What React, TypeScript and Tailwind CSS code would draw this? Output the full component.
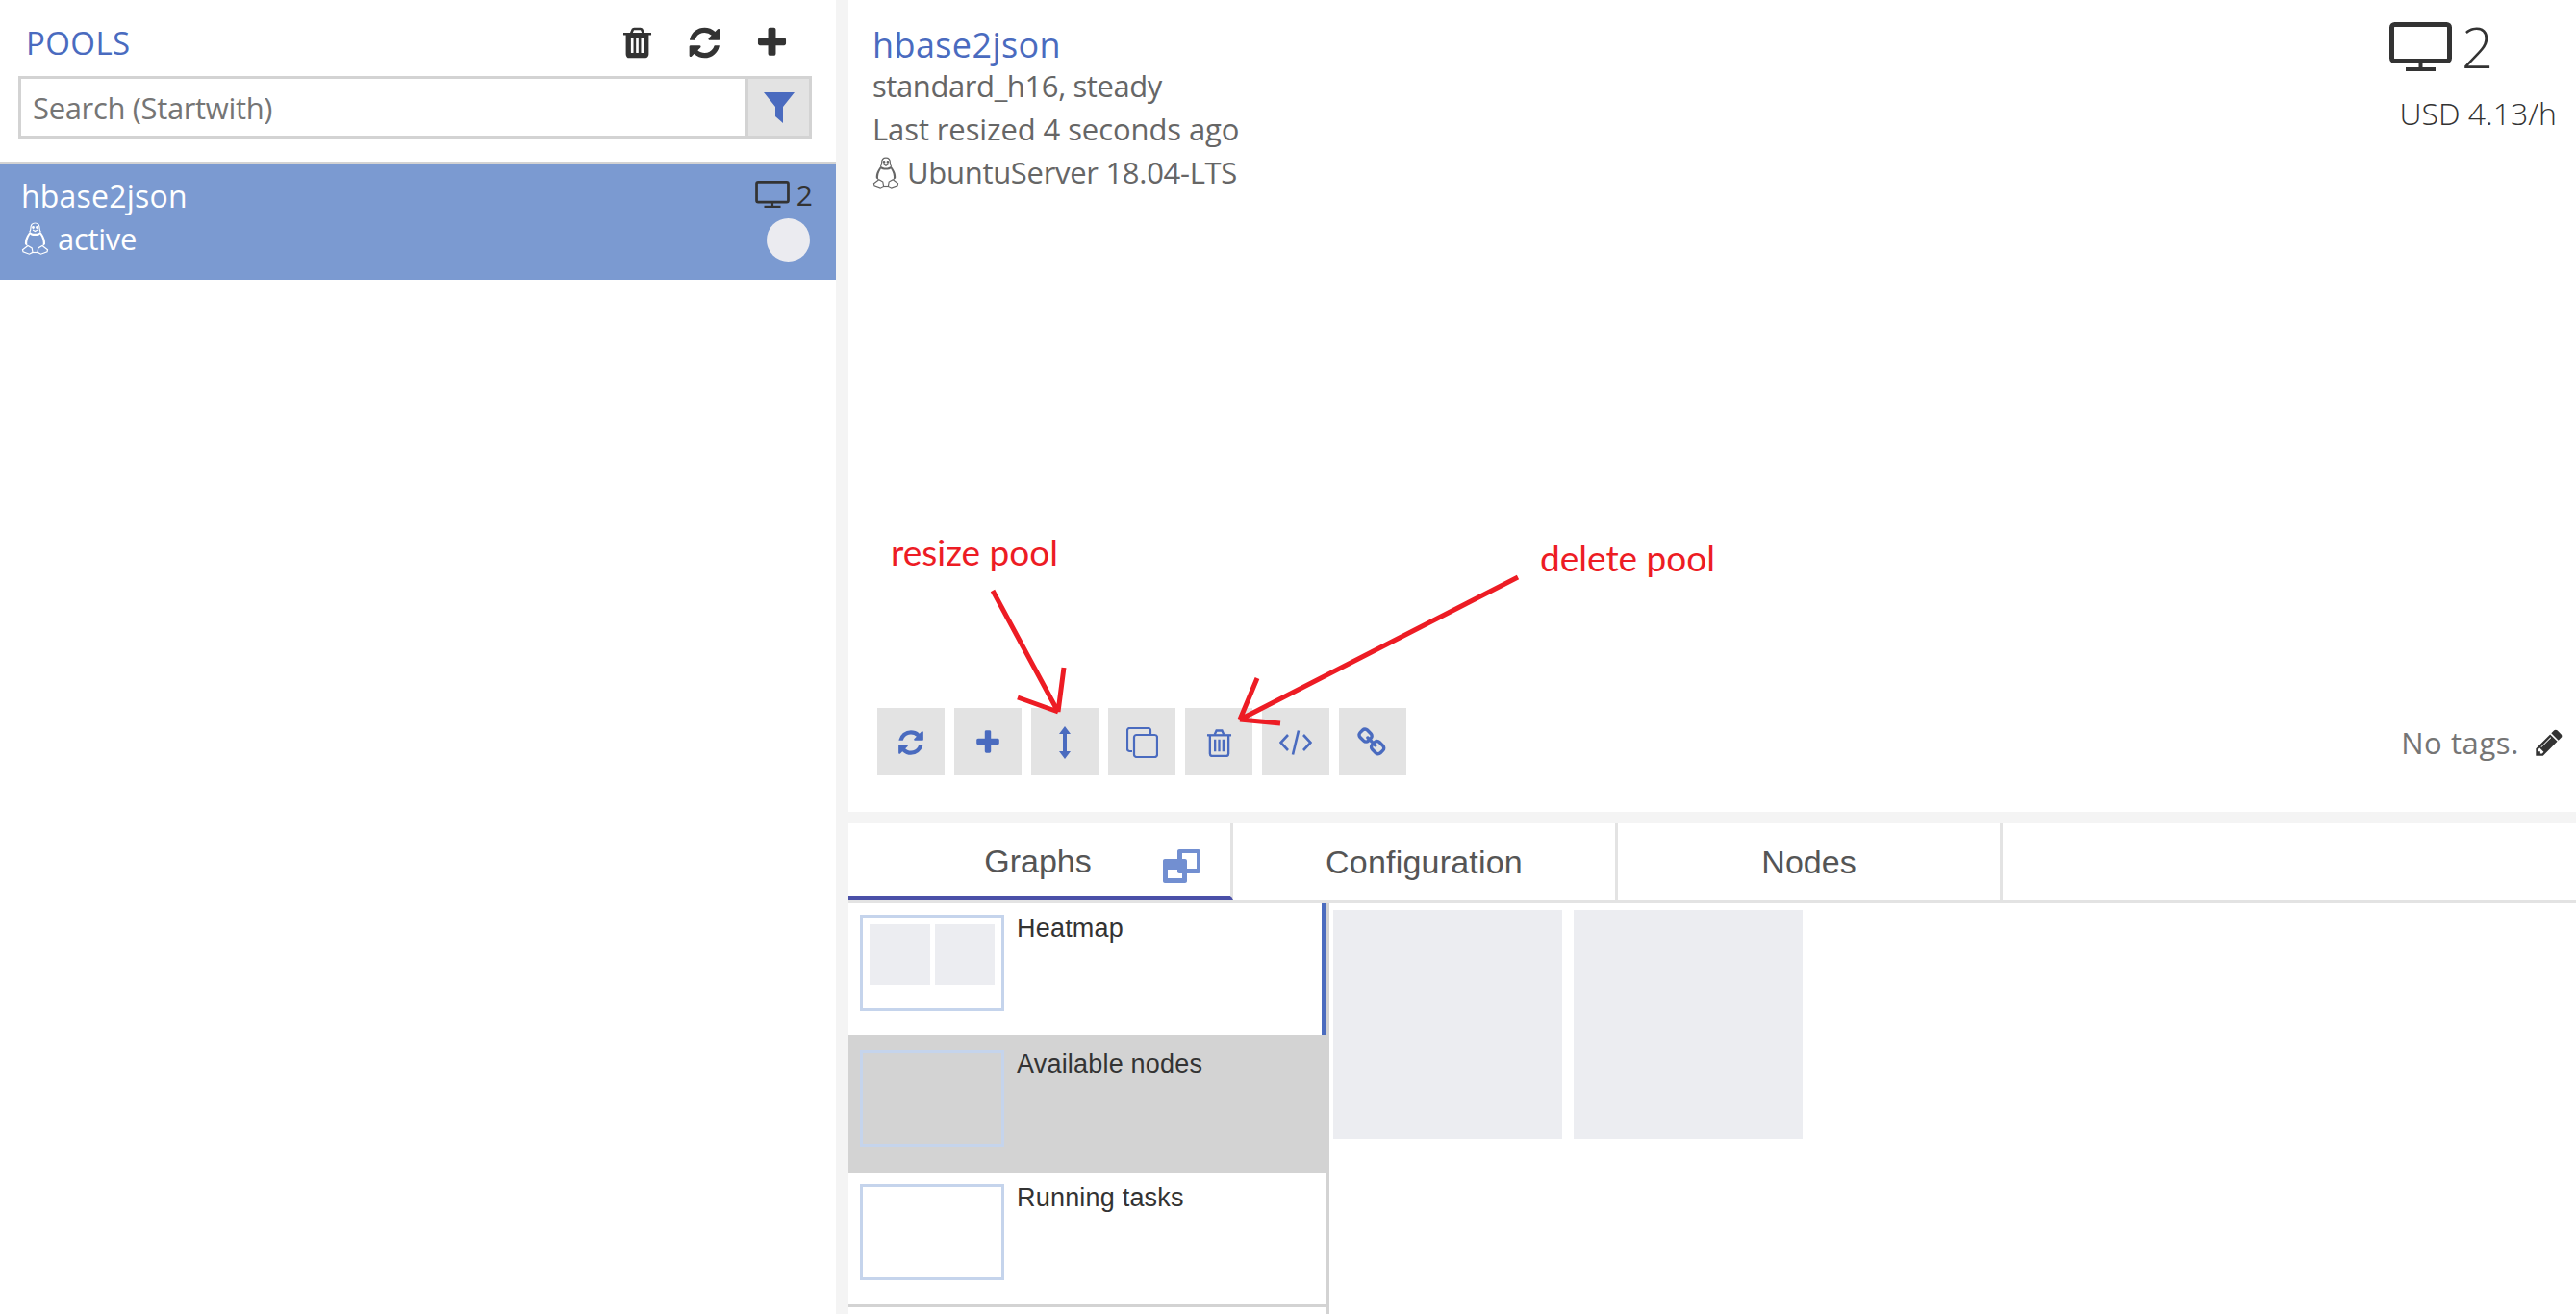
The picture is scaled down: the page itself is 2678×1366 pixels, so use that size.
import React from "react";

const segoe = "font-['Open_Sans','Noto_Sans',sans-serif]";

const faPaths = {
  refresh:
    "M1639 1056q0 5-1 7-64 268-268 434.5t-478 166.5q-146 0-282.5-55t-243.5-157l-129 129q-19 19-45 19t-45-19-19-45v-448q0-26 19-45t45-19h448q26 0 45 19t19 45-19 45l-137 137q71 66 161 102t187 36q134 0 250-65t186-179q11-17 53-117 8-23 30-23h192q13 0 22.5 9.5t9.5 22.5zm25-800v448q0 26-19 45t-45 19h-448q-26 0-45-19t-19-45 19-45l138-138q-148-137-349-137-134 0-250 65t-186 179q-11 17-53 117-8 23-30 23h-199q-13 0-22.5-9.5t-9.5-22.5v-7q65-268 270-434.5t480-166.5q146 0 284 55.5t245 156.5l130-129q19-19 45-19t45 19 19 45z",
  trash:
    "M704 1376v-704q0-14-9-23t-23-9h-64q-14 0-23 9t-9 23v704q0 14 9 23t23 9h64q14 0 23-9t9-23zm256 0v-704q0-14-9-23t-23-9h-64q-14 0-23 9t-9 23v704q0 14 9 23t23 9h64q14 0 23-9t9-23zm256 0v-704q0-14-9-23t-23-9h-64q-14 0-23 9t-9 23v704q0 14 9 23t23 9h64q14 0 23-9t9-23zm-544-992h448l-48-117q-7-9-17-11h-317q-10 2-17 11zm928 32v64q0 14-9 23t-23 9h-96v948q0 83-47 143.5t-113 60.5h-832q-66 0-113-58.5t-47-141.5v-952h-96q-14 0-23-9t-9-23v-64q0-14 9-23t23-9h309l70-167q15-37 54-63t79-26h320q40 0 79 26t54 63l70 167h309q14 0 23 9t9 23z",
  plus:
    "M1600 736v192q0 40-28 68t-68 28h-416v416q0 40-28 68t-68 28h-192q-40 0-68-28t-28-68v-416h-416q-40 0-68-28t-28-68v-192q0-40 28-68t68-28h416v-416q0-40 28-68t68-28h192q40 0 68 28t28 68v416h416q40 0 68 28t28 68z",
  link:
    "M1456 1216q0-40-28-68l-208-208q-28-28-68-28-42 0-72 32 3 3 19 18.5t21.5 21.5 15 19 13 25.5 3.5 27.5q0 40-28 68t-68 28q-15 0-27.5-3.5t-25.5-13-19-15-21.5-21.5-18.5-19q-33 31-33 73 0 40 28 68l206 207q27 27 68 27 40 0 68-26l147-146q28-28 28-67zm-703-705q0-40-28-68l-206-207q-28-28-68-28-39 0-68 27l-147 146q-28 28-28 67 0 40 28 68l208 208q27 27 68 27 42 0 72-31-3-3-19-18.5t-21.5-21.5-15-19-13-25.5-3.5-27.5q0-40 28-68t68-28q15 0 27.5 3.5t25.5 13 19 15 21.5 21.5 18.5 19q33-31 33-73zm895 705q0 120-85 203l-147 146q-83 83-203 83-121 0-204-85l-206-207q-83-83-83-203 0-123 88-209l-88-88q-86 88-208 88-120 0-204-84l-208-208q-84-84-84-204t85-203l147-146q83-83 203-83 121 0 204 85l206 207q83 83 83 203 0 123-88 209l88 88q86-88 208-88 120 0 204 84l208 208q84 84 84 204z",
  pencil:
    "M491 1536l91-91-235-235-91 91v107h128v128h107zm523-928q0-22-22-22-10 0-17 7l-542 542q-7 7-7 17 0 22 22 22 10 0 17-7l542-542q7-7 7-17zm-54-192l416 416-832 832h-416v-416zm683 96q0 53-37 90l-166 166-416-416 166-165q36-38 90-38 53 0 91 38l235 234q37 39 37 91z",
};

function Fa({ d, className }: { d: string; className?: string }) {
  return (
    <svg viewBox="0 0 1792 1792" fill="currentColor" className={className}>
      <path d={d} />
    </svg>
  );
}

function Monitor({ className }: { className?: string }) {
  return (
    <svg viewBox="0 0 65 51" fill="none" stroke="currentColor" className={className}>
      <rect x="2.5" y="2.5" width="60" height="38" rx="3" strokeWidth="5" />
      <path d="M32.5 41v7" strokeWidth="4" />
      <path d="M17 49h31" strokeWidth="4" />
    </svg>
  );
}

// outlined penguin, dark back and flippers, open belly
function Tux({ className }: { className?: string }) {
  return (
    <svg viewBox="0 0 29 34" fill="none" stroke="currentColor" strokeWidth="1.2" className={className}>
      <path d="M14.5 1c3.200 0 4.600 2.600 4.600 5.600 0 1.500.4 2.500 1.200 3.600" />
      <path d="M14.500 1c-3.200 0-4.600 2.600-4.600 5.600 0 1.500-.4 2.500-1.200 3.600" />
      <path fill="currentColor" stroke="none" d="M9 10c-3 3.500-5.500 8-5 13l2.500 2c-1-5 .5-9 2.800-12.500 1 1 2.200 1.500 5.200 1.500s4.200-.5 5.200-1.500c2.300 3.500 3.800 7.500 2.800 12.500l2.500-2c.5-5-2-9.500-5-13-1.500 1.300-3 1.800-5.500 1.800S10.500 11.300 9 10z" />
      <path d="M7 24.500L1.500 28.700l.5 2 6.500 2.500 3.500-1.800-.8-4.500z" />
      <path d="M22 24.500l5.500 4.200-.5 2-6.500 2.500-3.500-1.800.8-4.500z" />
      <path d="M11.500 31.500h6" />
      <circle cx="12.500" cy="5.500" r=".8" fill="currentColor" />
      <circle cx="16.500" cy="5.500" r=".8" fill="currentColor" />
      <path d="M12 8l2.500 1.500L17 8" />
    </svg>
  );
}

function CloneIcon({ className }: { className?: string }) {
  return (
    <svg viewBox="0 0 33 32" fill="none" stroke="currentColor" strokeWidth="2.2" className={className}>
      <path d="M6 25H3.500C2 25 1 24 1 22.500V3.500C1 2 2 1 3.500 1h19C24 1 25 2 25 3.500V7" />
      <rect x="8" y="8" width="24" height="23" rx="2.500" />
    </svg>
  );
}

function ThinTrash({ className }: { className?: string }) {
  return (
    <svg viewBox="0 0 28 30" fill="none" stroke="currentColor" strokeWidth="2.400" className={className}>
      <path d="M1 6.500h26" />
      <path d="M9 6l2-4.500h6L19 6" />
      <path d="M4 7v19.500C4 28 5 29 6.500 29h15c1.500 0 2.500-1 2.500-2.500V7" />
      <path d="M9.500 11v13M14 11v13M18.500 11v13" />
    </svg>
  );
}

function ResizeArrow({ className }: { className?: string }) {
  return (
    <svg viewBox="0 0 14 34" fill="currentColor" className={className}>
      <path d="M7 0l6 8H9v18h4l-6 8-6-8h4V8H1z" />
    </svg>
  );
}

function CodeIcon({ className }: { className?: string }) {
  return (
    <svg viewBox="0 0 34 26" fill="none" stroke="currentColor" strokeWidth="2.600" className={className}>
      <path d="M9 5L1.500 13 9 21" />
      <path d="M25 5l7.500 8-7.500 8" />
      <path d="M20 0.500L14 25.500" />
    </svg>
  );
}

function RestoreIcon({ className }: { className?: string }) {
  return (
    <svg viewBox="0 0 40 35" className={className}>
      <path fill="#728fd1" fillRule="evenodd" d="M17 0h20c1.100 0 2 .900 2 2v21c0 1.100-.900 2-2 2H17c-1.100 0-2-.900-2-2V2c0-1.100.900-2 2-2zm3 4v16h15V4z" />
      <path fill="#728fd1" fillRule="evenodd" d="M2 10h21c1.100 0 2 .900 2 2v21c0 1.100-.900 2-2 2H2c-1.100 0-2-.900-2-2V12c0-1.100.900-2 2-2zm3 11v9h15v-9z" />
    </svg>
  );
}

const toolbar = [
  <Fa d={faPaths.refresh} className="w-[30px] h-[30px]" />,
  <Fa d={faPaths.plus} className="w-[30px] h-[30px]" />,
  <ResizeArrow className="w-[14px] h-[34px]" />,
  <CloneIcon className="w-[33px] h-[32px]" />,
  <ThinTrash className="w-[27px] h-[29px]" />,
  <CodeIcon className="w-[34px] h-[26px]" />,
  <Fa d={faPaths.link} className="w-[32px] h-[32px]" />,
];

const graphs = [
  { name: "Heatmap", rowClass: "h-[137px] pt-[12px] border-r-[5px] border-[#4b6cbf] bg-white", filled: true },
  { name: "Available nodes", rowClass: "h-[143px] pt-[16px] bg-[#d3d3d3]", filled: false },
  { name: "Running tasks", rowClass: "h-[137px] pt-[12px] bg-white", filled: false },
];

export default function App() {
  return (
    <div className={`${segoe} flex w-[2678px] h-[1366px] overflow-hidden bg-[#f4f4f4] text-[#666]`}>
      {/* Pools list */}
      <aside className="w-[869px] h-full bg-white flex flex-col">
        <div className="flex items-center justify-between h-[79px] pl-[27px] pr-[48px] pt-[10px] shrink-0">
          <span className="text-[33px] font-medium text-[#4a6bbf] tracking-[0.4px]">POOLS</span>
          <div className="flex items-center gap-[33px] text-[#333]">
            <Fa d={faPaths.trash} className="w-[37px] h-[37px]" />
            <Fa d={faPaths.refresh} className="w-[37px] h-[37px]" />
            <Fa d={faPaths.plus} className="w-[37px] h-[37px]" />
          </div>
        </div>
        <div className="flex h-[65px] mx-[19px] w-[825px] border-[3px] border-[#d3d3d3] shrink-0">
          <div className="flex-1 flex items-center pl-[12px] pt-[2px] text-[31px] text-[#757575] tracking-[-0.35px]">Search (Startwith)</div>
          <div className="w-[66px] flex items-center justify-center bg-[#e3e3e3] border-l-[3px] border-[#d3d3d3]">
            <svg viewBox="0 0 32 32" className="w-[32px] h-[32px] text-[#4a6bbf]" fill="currentColor">
              <path d="M0 0h32L20 15v17l-8-7V15z" />
            </svg>
          </div>
        </div>
        <div className="mt-[24px] h-[123px] border-t-[3px] border-[#d3d3d3] bg-[#7b9ad1] flex justify-between pl-[22px] pr-[25px] shrink-0">
          <div className="text-white">
            <div className="text-[32px] leading-[44px] mt-[11px] tracking-[0.2px]">hbase2json</div>
            <div className="flex items-center gap-[9px] h-[44px]">
              <Tux className="w-[29px] h-[34px]" />
              <span className="text-[31px] tracking-[-0.3px]">active</span>
            </div>
          </div>
          <div className="flex flex-col items-end pt-[14px]">
            <div className="flex items-center gap-[7px] h-[34px] text-[#333]">
              <Monitor className="w-[36px] h-[28px]" />
              <span className="text-[30px] tracking-[-1px]">2</span>
            </div>
            <div className="w-[45px] h-[45px] rounded-full bg-[#ebebf0] mt-[8px] mr-[2px]" />
          </div>
        </div>
      </aside>

      {/* Pool details */}
      <main className="ml-[13px] flex-1 flex flex-col">
        <section className="relative h-[844px] bg-white flex flex-col justify-between pl-[25px] pr-[12px] pb-[38px] pt-[22px] shrink-0">
          <div className="flex justify-between pr-[8px]">
            <div className="text-[31px] leading-[45px]">
              <div className="text-[36px] text-[#4a6bbf] tracking-[0.4px] pt-[2px] mb-[-2px]">hbase2json</div>
              <div className="tracking-[-0.4px]">standard_h16, steady</div>
              <div className="tracking-[-0.1px]">Last resized 4 seconds ago</div>
              <div className="flex items-center gap-[8px] tracking-[-0.3px]">
                <Tux className="w-[28px] h-[33px] text-[#666]" />
                <span>UbuntuServer 18.04-LTS</span>
              </div>
            </div>
            <div className="flex flex-col items-end text-[#333]">
              <div className="flex items-center gap-[10px] mr-[66px] h-[53px]">
                <Monitor className="w-[65px] h-[51px]" />
                <span className="text-[58px] font-light leading-none">2</span>
              </div>
              <div className="text-[32px] mt-[19px] font-light">USD 4.13/h</div>
            </div>
          </div>
          <div className="flex items-end justify-between pl-[5px]">
            <div className="flex gap-[10px]">
              {toolbar.map((icon, i) => (
                <button key={i} className="w-[70px] h-[70px] pt-[2px] bg-[#e3e3e3] text-[#4a6bbf] flex items-center justify-center">
                  {icon}
                </button>
              ))}
            </div>
            <div className="flex items-center gap-[15px] pb-[11px]">
              <span className="text-[31px] tracking-[0.6px] text-[#757575]">No tags.</span>
              <Fa d={faPaths.pencil} className="w-[32px] h-[32px] text-[#333]" />
            </div>
          </div>

          {/* Red annotations drawn over the screenshot */}
          <span className="absolute left-[44px] top-[552px] font-['Lato',sans-serif] text-[37px] leading-[44px] text-[#ed1c24]">resize pool</span>
          <span className="absolute left-[719px] top-[558px] font-['Lato',sans-serif] text-[37px] leading-[44px] text-[#ed1c24]">delete pool</span>
          <svg className="absolute left-0 top-0 w-[1000px] h-[844px] pointer-events-none" viewBox="0 0 1000 844" fill="none" stroke="#ed1c24" strokeWidth="5">
            <path d="M150 614L218 740M224 694L218 740M176 725L218 740" />
            <path d="M696 600L407 748M425 705L407 748M449 752L407 748" />
          </svg>
        </section>

        <section className="mt-[12px] flex-1 bg-white flex flex-col min-h-0">
          <div className="flex h-[83px] border-b-[3px] border-[#e3e3e3] shrink-0 font-['Liberation_Sans',sans-serif] text-[34px] text-[#555]">
            <div className="relative w-[400px] border-r-[3px] border-b-[5px] border-r-[#e3e3e3] border-b-[#4a50a8] flex items-center justify-center pt-[3px]">
              <span className="pr-[3px]">Graphs</span>
              <RestoreIcon className="absolute left-[327px] top-[27px] w-[40px] h-[35px]" />
            </div>
            <div className="w-[400px] border-r-[3px] border-[#e3e3e3] flex items-center justify-center tracking-[0.2px]">Configuration</div>
            <div className="w-[400px] border-r-[3px] border-[#e3e3e3] flex items-center justify-center">Nodes</div>
          </div>
          <div className="flex flex-1 min-h-0">
            <div className="w-[500px] border-r-[3px] border-[#d3d3d3] font-['Liberation_Sans',sans-serif] text-[27px] tracking-[0.2px] text-[#333]">
              {graphs.map((g) => (
                <div key={g.name} className={`${g.rowClass} flex gap-[13px] pl-[12px]`}>
                  <div className="w-[150px] h-[100px] border-[3px] border-[#c5d4ec] flex gap-[5px] pl-[7px] pt-[7px] shrink-0">
                    {g.filled && (
                      <>
                        <div className="w-[63px] h-[63px] bg-[#ecedf1]" />
                        <div className="w-[62px] h-[63px] bg-[#ecedf1]" />
                      </>
                    )}
                  </div>
                  <span className="leading-[28px]">{g.name}</span>
                </div>
              ))}
              <div className="border-t-[3px] border-[#d3d3d3]" />
            </div>
            <div className="flex gap-[12px] pl-[4px] pt-[7px]">
              <div className="w-[238px] h-[238px] bg-[#ecedf1]" />
              <div className="w-[238px] h-[238px] bg-[#ecedf1]" />
            </div>
          </div>
        </section>
      </main>
    </div>
  );
}
